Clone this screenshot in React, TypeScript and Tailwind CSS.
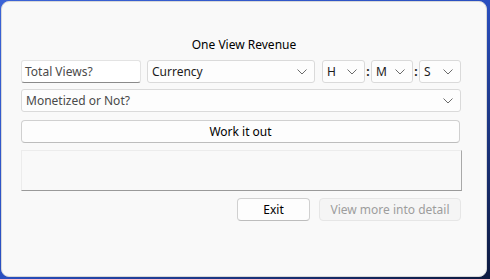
import React from "react";

const Chevron = () => (
  <svg width="10" height="6" viewBox="0 0 10 6" className="shrink-0">
    <path d="M0.5 0.5 L5 5 L9.5 0.5" fill="none" stroke="#6b6b6b" strokeWidth="1" />
  </svg>
);

const Select = ({ label, className }: { label: string; className: string }) => (
  <div
    className={`flex h-[23px] items-center justify-between rounded-[3px] border border-[#dadada] bg-[#fdfdfd] pl-[4px] pr-[7px] text-[12px] text-[#1b1b1b] ${className}`}
  >
    <span>{label}</span>
    <Chevron />
  </div>
);

export default function App() {
  return (
    <div
      className="h-[279px] w-[490px] overflow-hidden bg-gradient-to-br from-[#3b63d6] via-[#2a4fc0] to-[#0d1a40] pl-[1px] pt-[1px]"
      style={{ fontFamily: '"Noto Sans", "Open Sans", sans-serif' }}
    >
      <div className="flex h-[276px] w-[486px] flex-col rounded-[8px] border border-[#d8d8d8] bg-[#f9f9f9] px-[19px] pt-[35px]">
        <div className="text-center text-[12px] leading-[16px] text-black">One View Revenue</div>

        <div className="mt-[7px] flex items-center">
          <div className="flex h-[23px] w-[120px] items-center rounded-[3px] border border-[#e3e3e3] border-b-[#8a8a8a] bg-white pl-[3px] text-[12px] text-[#4a4a4a]">
            Total Views?
          </div>
          <Select label="Currency" className="ml-[6px] w-[168px]" />
          <Select label="H" className="ml-[7px] w-[43px]" />
          <span className="w-[6px] text-center text-[12px] font-bold leading-none text-[#1b1b1b]">:</span>
          <Select label="M" className="w-[42px]" />
          <span className="w-[6px] text-center text-[12px] font-bold leading-none text-[#1b1b1b]">:</span>
          <Select label="S" className="w-[42px]" />
        </div>

        <Select label="Monetized or Not?" className="mt-[6px] w-[440px] text-[#4a4a4a]" />

        <button className="mt-[8px] h-[23px] w-[439px] rounded-[4px] border border-[#d0d0d0] border-b-[#bdbdbd] bg-[#fdfdfd] text-[12px] text-black">
          Work it out
        </button>

        <div className="mt-[7px] h-[41px] w-[441px] border border-[#ececec] border-b-[#9a9a9a] border-r-[#a9a9a9] bg-[#f9f9f9]" />

        <div className="mt-[7px] flex w-[441px] justify-end gap-[9px] pr-[1px]">
          <button className="h-[23px] w-[73px] rounded-[4px] border border-[#d0d0d0] border-b-[#bdbdbd] bg-[#fdfdfd] text-[12px] text-black">
            Exit
          </button>
          <button className="h-[23px] w-[142px] rounded-[4px] border border-[#e6e6e6] bg-[#f5f5f5] text-[12px] text-[#9d9d9d]">
            View more into detail
          </button>
        </div>
      </div>
    </div>
  );
}
